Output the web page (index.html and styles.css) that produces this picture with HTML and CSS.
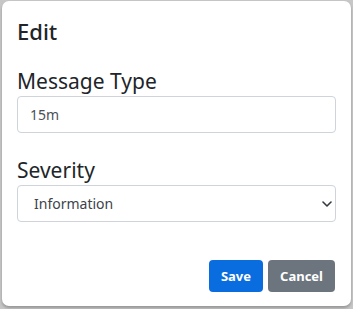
FILE: index.html
```html
<!DOCTYPE html>
<html lang="en">
<head>
    <meta charset="UTF-8">
    <meta name="viewport" content="width=device-width, initial-scale=1.0">
    <title>Edit</title>
    <link rel="stylesheet" href="styles.css">
</head>
<body>
    <div class="modal">
        <h4 class="modal-title">Edit</h4>
        <div class="field">
            <label for="message-type">Message Type</label>
            <input id="message-type" type="text" value="15m">
        </div>
        <div class="field">
            <label for="severity">Severity</label>
            <div class="select-wrap">
                <select id="severity">
                    <option>Information</option>
                    <option>Warning</option>
                    <option>Error</option>
                </select>
                <svg class="chevron" width="10" height="6" viewBox="0 0 10 6">
                    <path d="M1 1 L5 5 L9 1" fill="none" stroke="#343a40" stroke-width="1.6" stroke-linecap="round" stroke-linejoin="round"/>
                </svg>
            </div>
        </div>
        <div class="actions">
            <button class="btn btn-save">Save</button>
            <button class="btn btn-cancel">Cancel</button>
        </div>
    </div>
</body>
</html>
```

FILE: styles.css
```css
body {
    margin: 0;
    height: 309px;
    background-color: #c7c7c7;
    font-family: "Noto Sans", "Open Sans", sans-serif;
    color: #212529;
    overflow: hidden;
}
.modal {
    margin: 1px 2px 0 2px;
    height: 305px;
    box-sizing: border-box;
    padding: 15px 15px 0 15px;
    background-color: #fff;
    border-radius: 7px;
    box-shadow: 0 2px 3px rgba(0, 0, 0, 0.25);
}
.modal-title {
    margin: 0;
    font-size: 22px;
    font-weight: 500;
    line-height: 30px;
}
.field {
    margin-top: 23px;
}
.field + .field {
    margin-top: 25px;
}
label {
    display: block;
    font-size: 21px;
    line-height: 24px;
    margin-bottom: 3px;
}
input, select {
    display: block;
    width: 100%;
    box-sizing: border-box;
    height: 37px;
    padding: 0 12px;
    font-family: inherit;
    font-size: 14px;
    color: #495057;
    background-color: #fff;
    border: 1px solid #ced4da;
    border-radius: 4px;
    appearance: none;
}
.select-wrap {
    display: flex;
    align-items: center;
}
.select-wrap select {
    padding-left: 16px;
    color: #3d4349;
}
.chevron {
    margin-left: -14px;
    margin-right: 4px;
    pointer-events: none;
}
.actions {
    display: flex;
    justify-content: flex-end;
    gap: 5px;
    margin-top: 38px;
    padding-right: 1px;
}
.btn {
    height: 32px;
    padding: 0 12px;
    font-family: inherit;
    font-size: 13px;
    font-weight: 700;
    color: #fff;
    border: none;
    border-radius: 4px;
    cursor: pointer;
}
.btn-save {
    background-color: #0a6ddf;
}
.btn-cancel {
    background-color: #6c757d;
}
```
